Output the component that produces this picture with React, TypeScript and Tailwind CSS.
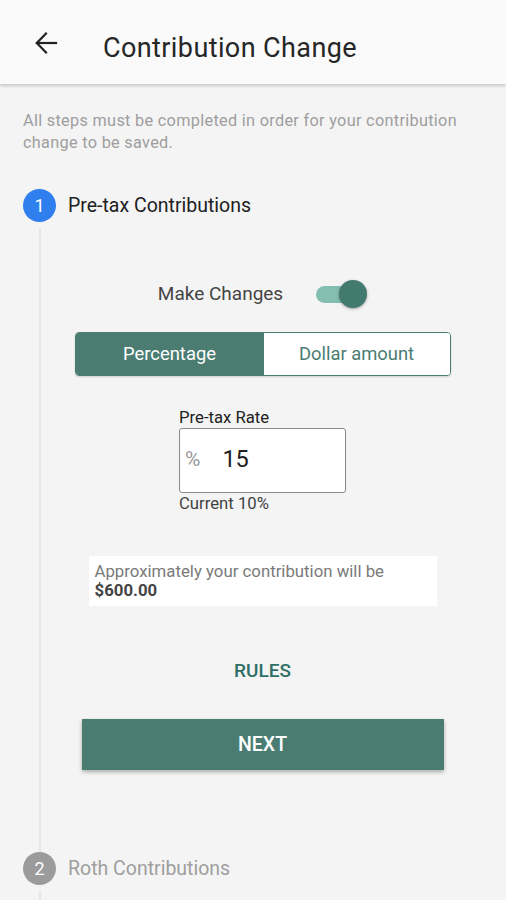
import React from "react";

export default function App() {
  return (
    <div className="w-[506px] h-[900px] overflow-hidden bg-[#f4f4f4] font-['Roboto',sans-serif]">
      <header className="h-[84px] bg-[#fafafa] flex items-center shadow-[0_2px_3px_rgba(0,0,0,0.18)] relative z-10">
        <div className="w-[103px] flex justify-start pl-[34px]">
          <svg width="24" height="24" viewBox="0 0 24 24" fill="none" stroke="#212121" strokeWidth="2.2" strokeLinecap="square" className="mt-[1px]">
            <path d="M3 12H22" />
            <path d="M12 2.5L2.8 12L12 21.5" />
          </svg>
        </div>
        <h1 className="text-[27px] text-[#262626] leading-none tracking-[0.4px] mt-[12px]">Contribution Change</h1>
      </header>

      <p className="mt-[26px] px-[23px] text-[16.3px] tracking-[0.3px] leading-[22px] text-[#9e9e9e]">
        All steps must be completed in order for your contribution change to be saved.
      </p>

      <div className="mt-[35px] px-[23px] flex items-center">
        <div className="w-[33px] h-[33px] rounded-full bg-[#2f7fee] text-white text-[18px] flex items-center justify-center">1</div>
        <span className="ml-[12px] text-[19.5px] text-[#212121]">Pre-tax Contributions</span>
      </div>

      <div className="ml-[39px] mt-[6px] border-l-2 border-[#e6e6e6] w-[445px] pt-[52px] pb-[82px] flex flex-col items-center">
        <div className="flex items-center">
          <span className="text-[19px] text-[#444] mr-[33px]">Make Changes</span>
          <div className="relative w-[51px] h-[28px] flex items-center">
            <div className="w-[46px] h-[17px] rounded-full bg-[#84beb0]" />
            <div className="absolute right-0 top-0 w-[28px] h-[28px] rounded-full bg-[#437a6f] shadow-[0_1px_3px_rgba(0,0,0,0.35)]" />
          </div>
        </div>

        <div className="mt-[23px] w-[376px] h-[44px] flex rounded-[4px] border border-[#4a7c72] overflow-hidden shadow-[0_1px_2px_rgba(0,0,0,0.15)]">
          <div className="w-[188px] bg-[#4a7c72] text-white text-[18.4px] flex items-center justify-center">Percentage</div>
          <div className="flex-1 bg-white text-[#4a7c72] text-[18.4px] flex items-center justify-center">Dollar amount</div>
        </div>

        <div className="mt-[33px] w-[167px]">
          <div className="text-[16.7px] text-[#212121] leading-[18px]">Pre-tax Rate</div>
          <div className="mt-[1px] h-[65px] bg-white border border-[#8a8a8a] rounded-[3px] flex items-center">
            <span className="ml-[5px] text-[21px] text-[#9a9a9a]">%</span>
            <span className="ml-[22px] text-[23.5px] text-[#212121]">15</span>
          </div>
          <div className="text-[16.7px] text-[#424242] leading-[20px] mt-[1px]">Current 10%</div>
        </div>

        <div className="mt-[42px] w-[348px] h-[50px] bg-white px-[6px] pt-[6px] text-[16.8px] leading-[19px]">
          <div className="text-[#7a7a7a]">Approximately your contribution will be</div>
          <div className="text-[#444] font-bold">$600.00</div>
        </div>

        <div className="mt-[51px] text-[19px] font-medium text-[#2f6f66]">RULES</div>

        <button className="mt-[34px] w-[362px] h-[51px] bg-[#4a7c72] text-white text-[19.5px] font-medium shadow-[0_2px_4px_rgba(0,0,0,0.3)]">NEXT</button>
      </div>

      <div className="px-[23px] flex items-center">
        <div className="w-[33px] h-[33px] rounded-full bg-[#9b9b9b] text-white text-[18px] flex items-center justify-center">2</div>
        <span className="ml-[12px] text-[19.5px] text-[#9e9e9e]">Roth Contributions</span>
      </div>
      <div className="ml-[39px] mt-[6px] border-l-2 border-[#e6e6e6] h-[40px]" />
    </div>
  );
}
